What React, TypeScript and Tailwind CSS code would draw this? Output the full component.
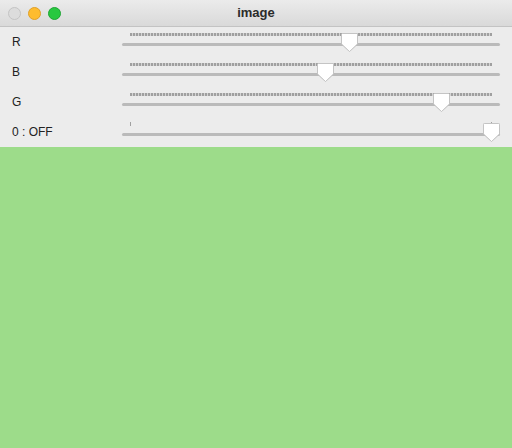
const sliders = [
  { label: "R", value: 155, max: 255 },
  { label: "B", value: 138, max: 255 },
  { label: "G", value: 220, max: 255 },
  { label: "0 : OFF", value: 1, max: 1 },
];

function Thumb() {
  return (
    <svg width="19" height="21" viewBox="0 0 19 21">
      <path
        d="M2.5 1.5 H16.5 Q17.5 1.5 17.5 2.5 V12 L9.5 19.5 L1.5 12 V2.5 Q1.5 1.5 2.5 1.5 Z"
        fill="#ffffff"
        stroke="#c4c4c4"
        strokeWidth="1"
      />
    </svg>
  );
}

function Slider({ value, max }: { value: number; max: number }) {
  const pct = value / max;
  return (
    <div className="relative h-[30px] w-[378px]">
      {max > 1 ? (
        <div className="absolute left-[8px] top-[6px] h-[3px] w-[362px] bg-[repeating-linear-gradient(90deg,#a0a0a0_0px,#a0a0a0_2px,#d4d4d4_2px,#d4d4d4_3px)]" />
      ) : (
        <>
          <div className="absolute left-[8px] top-[5px] h-[4px] w-px bg-[#a0a0a0]" />
          <div className="absolute left-[369px] top-[5px] h-[4px] w-px bg-[#a0a0a0]" />
        </>
      )}
      <div className="absolute left-0 top-[16px] h-[3px] w-[378px] rounded-full bg-[#bababa]" />
      <div
        className="absolute top-[5px] drop-shadow-[0_0.5px_0.5px_rgba(0,0,0,0.15)]"
        style={{ left: 9 + pct * 360 - 9.5 }}
      >
        <Thumb />
      </div>
    </div>
  );
}

export default function App() {
  return (
    <div className="flex h-[448px] w-[512px] flex-col overflow-hidden bg-[#9ddc8a] font-['Liberation_Sans',Arial,sans-serif]">
      <div className="relative flex h-[27px] shrink-0 items-center justify-center border-b border-[#c3c3c3] bg-[linear-gradient(#ebebeb,#d9d9d9)]">
        <div className="absolute left-[8px] top-[7px] flex gap-[7px]">
          <span className="h-[13px] w-[13px] rounded-full border border-[#c4c4c4] bg-[#dcdcdc]" />
          <span className="h-[13px] w-[13px] rounded-full border border-[#e0a028] bg-[#febc2e]" />
          <span className="h-[13px] w-[13px] rounded-full border border-[#1fa534] bg-[#28c840]" />
        </div>
        <span className="text-[13px] font-bold text-[#2b2b2b]">image</span>
      </div>
      <div className="flex flex-col bg-[#ececec]">
        {sliders.map((s) => (
          <div key={s.label} className="flex h-[30px] items-start">
            <span className="w-[122px] pl-[12px] pt-[8px] text-[12px] leading-[14px] text-[#222]">
              {s.label}
            </span>
            <Slider value={s.value} max={s.max} />
          </div>
        ))}
      </div>
    </div>
  );
}
